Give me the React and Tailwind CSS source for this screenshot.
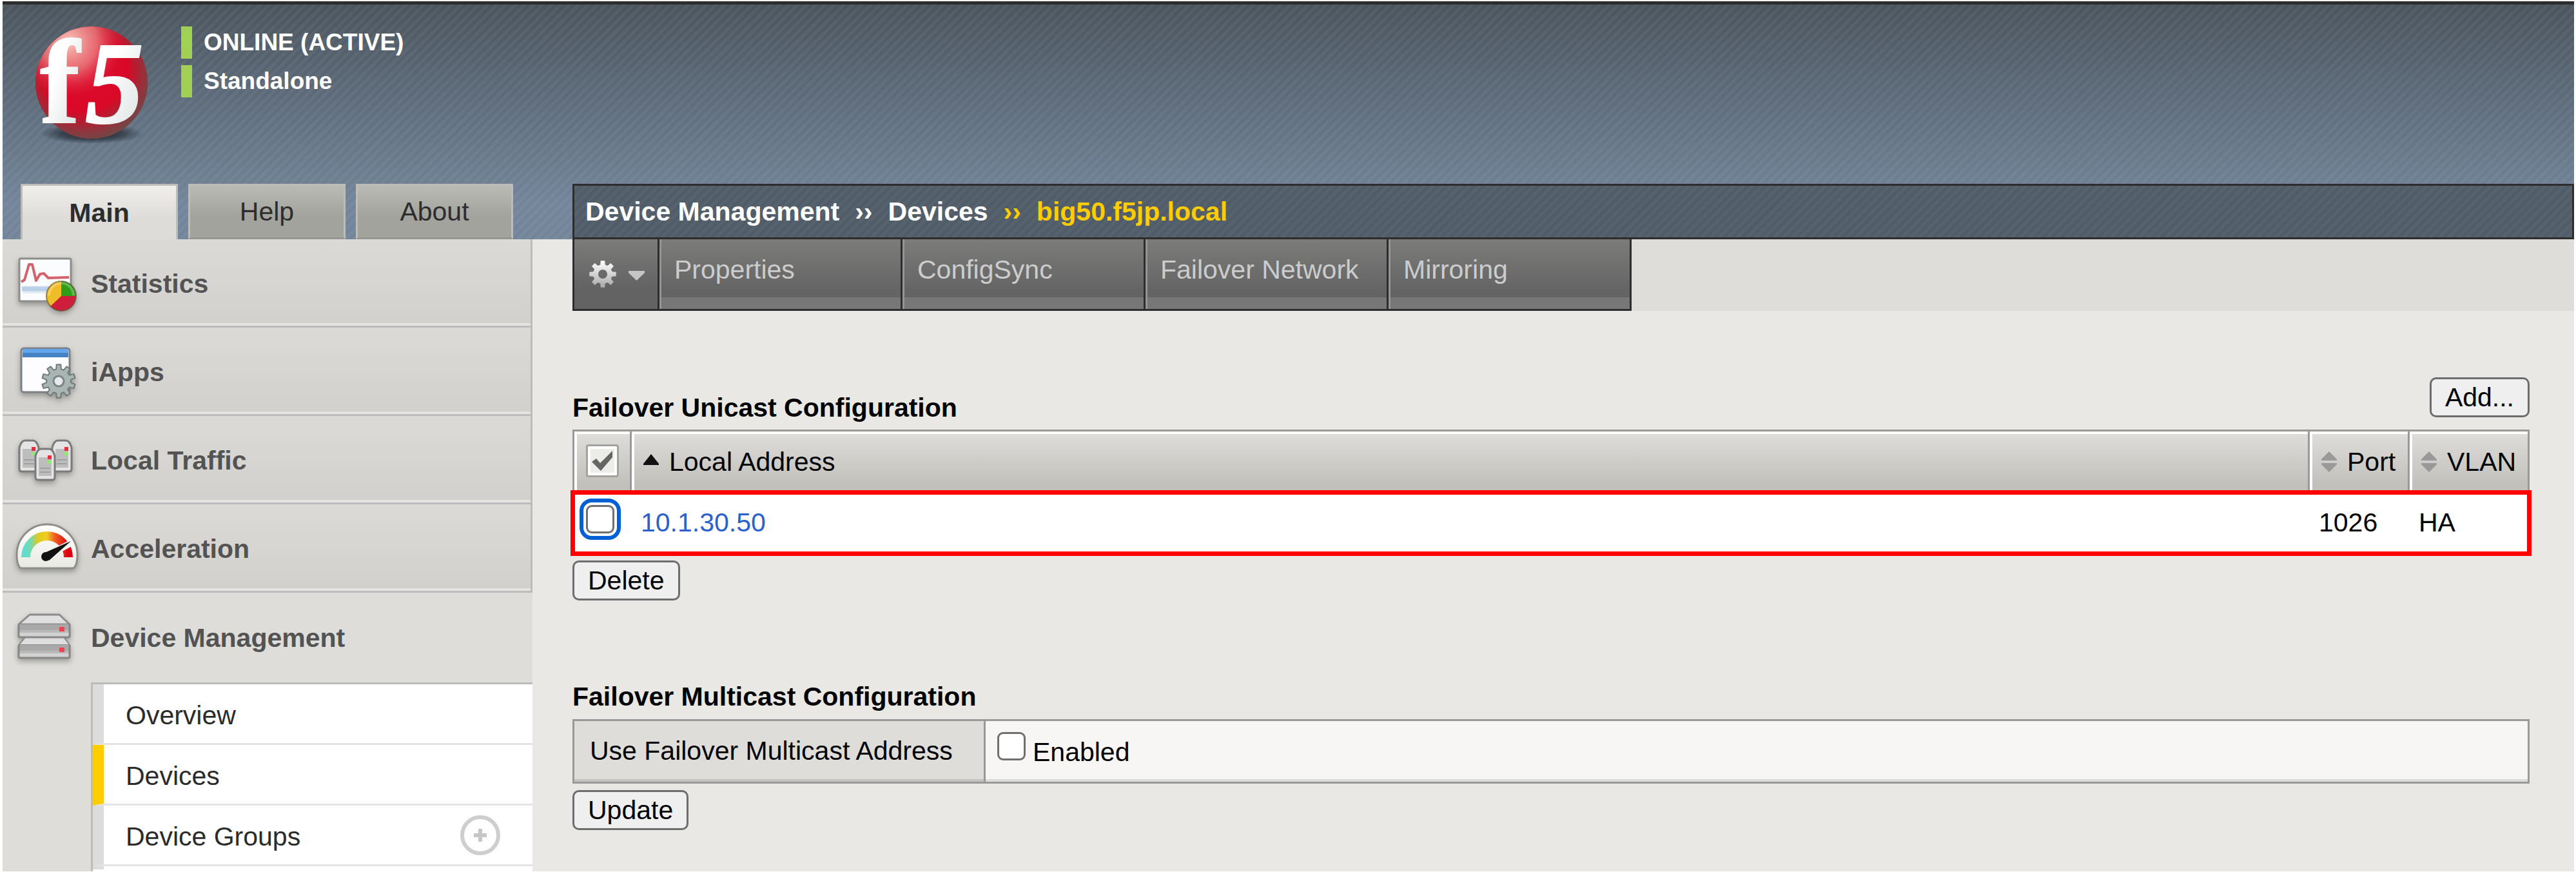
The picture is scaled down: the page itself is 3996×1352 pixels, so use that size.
import React from "react";

const ballCircle = { cx: 142, cy: 128, r: 87 };

function F5Logo() {
  return (
    <svg className="h-[250px] w-[206px] shrink-0" viewBox="34 7 206 250" role="img" aria-label="f5">
      <defs>
        <radialGradient id="ball" cx="0.5" cy="0.5" r="0.55">
          <stop offset="0" stopColor="#dc0a2a" />
          <stop offset="0.7" stopColor="#d80826" />
          <stop offset="1" stopColor="#b81a2c" />
        </radialGradient>
        <radialGradient id="shine" cx="0.3" cy="0.14" r="0.5">
          <stop offset="0" stopColor="#f9c4bc" />
          <stop offset="0.5" stopColor="#ee8f8c" stopOpacity="0.7" />
          <stop offset="1" stopColor="#e02040" stopOpacity="0" />
        </radialGradient>
        <radialGradient id="shade" cx="0.42" cy="0.36" r="0.66">
          <stop offset="0.6" stopColor="#6d4a48" stopOpacity="0" />
          <stop offset="1" stopColor="#6d4a48" stopOpacity="0.95" />
        </radialGradient>
        <radialGradient id="ground">
          <stop offset="0" stopColor="#14191f" stopOpacity="0.95" />
          <stop offset="0.6" stopColor="#1c242c" stopOpacity="0.6" />
          <stop offset="1" stopColor="#1c242c" stopOpacity="0" />
        </radialGradient>
        <linearGradient id="glyph" x1="0" y1="0" x2="1" y2="1">
          <stop offset="0.4" stopColor="#ffffff" />
          <stop offset="1" stopColor="#d5dcdb" />
        </linearGradient>
      </defs>
      <ellipse cx="142" cy="207" rx="80" ry="16" fill="url(#ground)" />
      <circle {...ballCircle} fill="url(#ball)" />
      <circle {...ballCircle} fill="url(#shine)" />
      <circle {...ballCircle} fill="url(#shade)" />
      <g fontFamily="'Liberation Serif', serif" fontWeight="700" fill="url(#glyph)" stroke="url(#glyph)" strokeWidth="2">
        <text x="62" y="190" fontSize="186">f</text>
        <text x="132" y="190" fontSize="182" fontStyle="italic">5</text>
      </g>
    </svg>
  );
}

function gearPath(cx, cy, outer, inner, teeth) {
  const pts = [];
  const step = (Math.PI * 2) / teeth;
  for (let i = 0; i < teeth; i++) {
    const a = i * step - Math.PI / 2;
    [
      [-0.32, inner],
      [-0.2, outer],
      [0.2, outer],
      [0.32, inner],
    ].forEach(([o, r]) => {
      pts.push(`${(cx + r * Math.cos(a + o * step)).toFixed(1)} ${(cy + r * Math.sin(a + o * step)).toFixed(1)}`);
    });
  }
  return `M${pts.join("L")}Z`;
}

function StatisticsIcon() {
  return (
    <>
      <rect x="26" y="31" width="80" height="66" rx="2" fill="#fbfcfd" stroke="#8d8d8b" strokeWidth="3" />
      <path d="M32 75h68M32 83h68" stroke="#e3ebf3" strokeWidth="4" />
      <path d="M30 78h44" stroke="#bad0e8" strokeWidth="7" />
      <path d="M29 67l5-3 7-24 5 0 6 25 6-10 6-1 7 7 32-1" fill="none" stroke="#d4626a" strokeWidth="4" strokeLinejoin="round" />
      <circle cx="91" cy="89" r="23" fill="#cf1e3c" />
      <path d="M91 89V66a23 23 0 0 1 23 23z" fill="#2f9e17" />
      <path d="M91 89V66a23 23 0 0 0-17 39z" fill="#efbd28" />
      <path d="M72 88a19 19 0 0 1 38 0" fill="none" stroke="#fff" strokeOpacity="0.25" strokeWidth="4" />
      <circle cx="91" cy="89" r="23" fill="none" stroke="#5a5030" strokeOpacity="0.6" strokeWidth="2" />
    </>
  );
}

function IAppsIcon() {
  return (
    <>
      <rect x="29" y="33" width="75" height="68" rx="4" fill="#fdfdff" stroke="#7d8084" strokeWidth="3" />
      <path d="M31 34h71v13H31z" fill="#4683c4" />
      <path d="M31 34h71v6H31z" fill="#62a6ee" />
      <path d={gearPath(87, 84, 26, 19, 10)} fill="#a9b5b3" stroke="#6f7a79" strokeWidth="2" strokeLinejoin="round" />
      <circle cx="87" cy="84" r="8" fill="#e8e9ec" stroke="#7b8685" strokeWidth="3" />
    </>
  );
}

function Tower({ x, y }) {
  return (
    <g transform={`translate(${x} ${y})`}>
      <path d="M1 12Q4 1 10 1h12q6 0 9 11v33q0 4-4 4H5q-4 0-4-4z" fill="#e4e4e4" stroke="#7a7a7a" strokeWidth="3" />
      <path d="M6 14h20v29H6z" fill="#bdbdbd" />
      <path d="M8 31h16M8 37h16" stroke="#a0a0a0" strokeWidth="2" />
      <path d="M20 11h6v6h-6z" fill="#ee2b3c" />
      <path d="M20 19h6v5h-6z" fill="#93ea6f" />
    </g>
  );
}

function LocalTrafficIcon() {
  return (
    <>
      <Tower x={25} y={38} />
      <Tower x={76} y={38} />
      <Tower x={50} y={51} />
    </>
  );
}

function AccelerationIcon() {
  return (
    <>
      <defs>
        <linearGradient id="dial" x1="0" x2="1" y1="0" y2="0">
          <stop offset="0" stopColor="#62dccf" />
          <stop offset="0.12" stopColor="#7ad8a8" />
          <stop offset="0.3" stopColor="#e3cc1c" />
          <stop offset="0.5" stopColor="#f0cc24" />
          <stop offset="0.68" stopColor="#ee6020" />
          <stop offset="1" stopColor="#e00014" />
        </linearGradient>
        <linearGradient id="dialBody" x1="0" x2="0" y1="0" y2="1">
          <stop offset="0" stopColor="#ffffff" />
          <stop offset="1" stopColor="#e9e9e3" />
        </linearGradient>
      </defs>
      <path d="M26 98q-4-6-4-19a47 47 0 0 1 94 0q0 13-4 19-1 2-5 2H31q-4 0-5-2z" fill="url(#dialBody)" stroke="#8d8d8b" strokeWidth="3" />
      <path d="M36 83a33 33 0 0 1 66 0" fill="none" stroke="url(#dial)" strokeWidth="14" />
      <path d="M70 80L108 60" stroke="#f6f6f3" strokeWidth="10" />
      <path d="M63 77l43-19-34 30z" fill="#111" />
      <circle cx="67" cy="82" r="7" fill="#111" />
    </>
  );
}

function DeviceIcon() {
  return (
    <>
      <path d="M25 80l10-12h60l9 12z" fill="#dedede" stroke="#8c8c8c" strokeWidth="2" strokeLinejoin="round" />
      <path d="M25 48l17-15h46l16 15z" fill="#e0e0e0" stroke="#8c8c8c" strokeWidth="3" strokeLinejoin="round" />
      {[48, 80].map((y) => (
        <g key={y} transform={`translate(0 ${y})`}>
          <path d="M25 0h79v20H25z" fill="#a9a9a9" />
          <path d="M26 9h77v4H26z" fill="#b9b9b9" />
          <path d="M26 13h77v6H26z" fill="#d2d2d2" />
          <path d="M25 0v18q0 2 2 2h75q2 0 2-2V0" fill="none" stroke="#868686" strokeWidth="3" />
          <path d="M88 4h8v7h-8z" fill="#ee4252" />
        </g>
      ))}
    </>
  );
}

function SideIcon({ children }) {
  return (
    <svg className="size-[137px] shrink-0 drop-shadow-[0_4px_4px_rgba(0,0,0,0.3)]" viewBox="0 0 137 137" aria-hidden="true">
      {children}
    </svg>
  );
}

const sections = [
  { label: "Statistics", Icon: StatisticsIcon },
  { label: "iApps", Icon: IAppsIcon },
  { label: "Local Traffic", Icon: LocalTrafficIcon },
  { label: "Acceleration", Icon: AccelerationIcon },
];

const devicePages = [
  { label: "Overview" },
  { label: "Devices", active: true },
  { label: "Device Groups", add: true },
];

const tabs = ["Properties", "ConfigSync", "Failover Network", "Mirroring"];

function Sidebar() {
  return (
    <aside className="flex w-[822px] shrink-0 flex-col bg-[#deddd9]">
      <nav className="flex flex-1 flex-col">
        {sections.map(({ label, Icon }) => (
          <a
            key={label}
            href="#"
            className="flex h-[137px] items-center border-r-[3px] border-b-[3px] border-[#bcbcbc] bg-linear-to-b from-[#dbdad6] to-[#d1d0cc] font-bold text-[#535353] shadow-[inset_0_-4px_0_#e4e3df]"
          >
            <SideIcon>
              <Icon />
            </SideIcon>
            <span className="pt-1">{label}</span>
          </a>
        ))}
        <a href="#" className="flex h-[139px] items-center font-bold text-[#535353]">
          <SideIcon>
            <DeviceIcon />
          </SideIcon>
          Device Management
        </a>
        <ul className="ml-[137px] flex-1 border-t-[3px] border-l-[3px] border-[#bcbcbc] bg-white">
          {devicePages.map(({ label, active, add }) => (
            <li
              key={label}
              className={
                "flex h-[94px] items-center justify-between border-b-[3px] border-l-[17px] border-b-[#e4e4e4] pr-[50px] pl-[34px] " +
                (active ? "border-l-[#ffcc00]" : "border-l-[#dcdcdc]")
              }
            >
              <a href="#" className="pt-1 text-[#2b2b2b]">{label}</a>
              {add && (
                <button type="button" aria-label="Create device group" className="flex size-[62px] items-center justify-center rounded-full border-[6px] border-[#cecece]">
                  <svg className="size-5" viewBox="0 0 20 20">
                    <path d="M10 0v20M0 10h20" stroke="#c6c6c6" strokeWidth="6" />
                  </svg>
                </button>
              )}
            </li>
          ))}
          <li className="h-[5px] border-l-[17px] border-[#dcdcdc]" />
        </ul>
      </nav>
    </aside>
  );
}

function SortIcon({ sorted }) {
  return (
    <svg className="h-8 w-6 shrink-0" viewBox="0 0 24 32" aria-hidden="true">
      {sorted ? (
        <path d="M0 19L12 4l12 15v2H0z" fill="#111" />
      ) : (
        <path d="M0 14v-2L12 0l12 12v2zM0 18v2l12 12 12-12v-2z" fill="#999" />
      )}
    </svg>
  );
}

const headCell =
  "border-r-[3px] border-[#999] bg-linear-to-b from-[#dfdedb] to-[#c1c0bb] to-85% p-0 text-left align-top font-normal shadow-[inset_4px_4px_0_#fff] last:border-r-0";
const headLabel = "mt-[23px] flex items-center gap-4";
const bodyCell = "p-0 pt-5 pl-[14px] align-top";
const box = "size-11 shrink-0 appearance-none rounded-[9px] border-[3px] border-[#707070] bg-white";
const actionButton = "rounded-[10px] border-[3px] border-[#6d6d6d] bg-[#efefef] px-[21px] leading-[56px] text-black";

export default function App() {
  return (
    <div className="flex min-h-screen flex-col bg-white pt-[2px] pr-[3px] pb-px pl-1 font-['Liberation_Sans',Arial,sans-serif] text-[41px] leading-[48px] text-black">
      <header className="border-t-[5px] border-[#2d2d2d] bg-[repeating-linear-gradient(135deg,rgba(255,255,255,0.045)_0px,rgba(255,255,255,0.045)_5px,transparent_5px,transparent_10px),linear-gradient(#4b555e,#73859a_85%)]">
        <div className="flex h-[278px] pl-[30px]">
          <F5Logo />
          <div className="mt-[34px] ml-[41px] flex flex-col gap-[10px] text-[37px] leading-[50px] font-bold text-white">
            <p className="border-l-[17px] border-[#a0d155] pl-[18px]">ONLINE (ACTIVE)</p>
            <p className="border-l-[17px] border-[#a0d155] pl-[18px]">Standalone</p>
          </div>
        </div>
        <div className="flex h-[86px]">
          <nav className="flex w-[884px] shrink-0 gap-4 pl-7 text-[#2d2d2d]">
            <button type="button" className="w-[244px] border-x-[3px] border-t-[3px] border-[#bdbcb9] bg-linear-to-b from-[#f0efed] to-[#dddcd8] to-60% font-bold">Main</button>
            <button type="button" className="w-[244px] border-[3px] border-[#bdbcb9] border-b-[#979793] bg-linear-to-b from-[#babab6] to-[#a3a39e] to-60%">Help</button>
            <button type="button" className="w-[244px] border-[3px] border-[#bdbcb9] border-b-[#979793] bg-linear-to-b from-[#babab6] to-[#a3a39e] to-60%">About</button>
          </nav>
          <nav
            aria-label="Breadcrumb"
            className="flex flex-1 items-center border-[3px] border-[#2d2d2d] bg-[#505c68] bg-[repeating-linear-gradient(135deg,rgba(255,255,255,0.035)_0px,rgba(255,255,255,0.035)_5px,transparent_5px,transparent_10px)] pl-[17px] font-bold text-white"
          >
            <a href="#">Device Management</a>
            <span className="mx-6">››</span>
            <a href="#">Devices</a>
            <span className="mx-6 text-[#ffcc00]">››</span>
            <span className="text-[#ffcc00]">big50.f5jp.local</span>
          </nav>
        </div>
      </header>

      <div className="flex flex-1">
        <Sidebar />
        <main className="min-w-0 flex-1 bg-[#e9e8e4]">
          <nav className="ml-[62px] flex h-[111px] bg-[#deddd9]">
            <button type="button" aria-label="Options" className="flex w-[135px] items-center gap-[18px] border-x-[3px] border-b-[3px] border-[#2d2d2d] bg-linear-to-b from-[#7c7c7b] to-[#636363] to-70% pl-[22px]">
              <svg className="size-11" viewBox="0 0 44 44">
                <defs>
                  <linearGradient id="cog" x1="0" x2="0" y1="0" y2="1">
                    <stop offset="0" stopColor="#ffffff" />
                    <stop offset="1" stopColor="#a8a8a8" />
                  </linearGradient>
                </defs>
                <path fillRule="evenodd" d={gearPath(22, 22, 21, 15, 8) + "M22 15a7 7 0 1 0 0 14a7 7 0 1 0 0-14z"} fill="url(#cog)" />
              </svg>
              <svg className="mt-1 h-[15px] w-[25px]" viewBox="0 0 25 15">
                <path d="M0 0h25v3L12.500 15 0 3z" fill="#c6c6c6" />
              </svg>
            </button>
            {tabs.map((tab) => (
              <a
                key={tab}
                href="#"
                className="w-[377px] border-r-[3px] border-b-[3px] border-[#2d2d2d] bg-[linear-gradient(#7c7c7b,#646464_80px,#646464_90px,#777_90px)] pt-[23px] pl-[23px] text-[#cccccc] shadow-[inset_3px_0_0_#959595]"
              >
                {tab}
              </a>
            ))}
          </nav>

          <div className="pt-[103px] pr-[69px] pl-[62px]">
            <section>
              <div className="flex h-[81px] items-start justify-between">
                <h2 className="pt-[23px] font-bold">Failover Unicast Configuration</h2>
                <button type="button" className={actionButton}>Add...</button>
              </div>
              <table className="w-full table-fixed border-separate border-spacing-0 border-[3px] border-[#999]">
                <thead>
                  <tr className="h-[97px]">
                    <th className={headCell + " w-[89px]"}>
                      <button type="button" aria-label="Select all" className="mt-5 ml-[18px] flex size-[51px] items-center justify-center rounded-[4px] border-[3px] border-[#a2a29f] bg-[#ecece9] shadow-[inset_0_0_0_4px_#fff]">
                        <svg className="size-9" viewBox="0 0 36 36">
                          <path d="M1 19l7-5 6 7L33 2v10L15 33z" fill="#666" />
                        </svg>
                      </button>
                    </th>
                    <th className={headCell}>
                      <span className={headLabel + " ml-[18px]"}><SortIcon sorted />Local Address</span>
                    </th>
                    <th className={headCell + " w-[155px]"}>
                      <span className={headLabel + " ml-[18px]"}><SortIcon />Port</span>
                    </th>
                    <th className={headCell + " w-[183px]"}>
                      <span className={headLabel + " ml-[18px]"}><SortIcon />VLAN</span>
                    </th>
                  </tr>
                </thead>
                <tbody>
                  <tr className="h-[90px] bg-white outline-[7px] -outline-offset-1 outline-[#ff0000] outline-solid">
                    <td className="p-0 align-top">
                      <input type="checkbox" aria-label="Select 10.1.30.50" className={box + " mt-[17px] ml-[18px] block outline-[6px] outline-offset-4 outline-[#0060d6] outline-solid"} />
                    </td>
                    <td className={bodyCell}>
                      <a href="#" className="text-[#2b61cc]">10.1.30.50</a>
                    </td>
                    <td className={bodyCell}>1026</td>
                    <td className={bodyCell}>HA</td>
                  </tr>
                </tbody>
              </table>
              <button type="button" className={actionButton + " mt-[10px]"}>Delete</button>
            </section>

            <section className="mt-[125px]">
              <h2 className="font-bold">Failover Multicast Configuration</h2>
              <table className="mt-[11px] w-full table-fixed border-separate border-spacing-0 border-[3px] border-[#999]">
                <tbody>
                  <tr className="h-[94px]">
                    <th scope="row" className="w-[638px] border-r-[3px] border-[#999] bg-[#deddd9] p-0 pt-[22px] pl-[24px] text-left align-top font-normal shadow-[inset_0_-4px_0_#c3c2be]">
                      Use Failover Multicast Address
                    </th>
                    <td className="bg-[#f7f6f4] p-0 align-top shadow-[inset_0_-4px_0_#dcdcda]">
                      <label className="flex items-start gap-[11px] pt-[17px] pl-[18px]">
                        <input type="checkbox" className={box} />
                        <span className="pt-[7px]">Enabled</span>
                      </label>
                    </td>
                  </tr>
                </tbody>
              </table>
              <button type="button" className={actionButton + " mt-[10px]"}>Update</button>
            </section>
          </div>
        </main>
      </div>
    </div>
  );
}
